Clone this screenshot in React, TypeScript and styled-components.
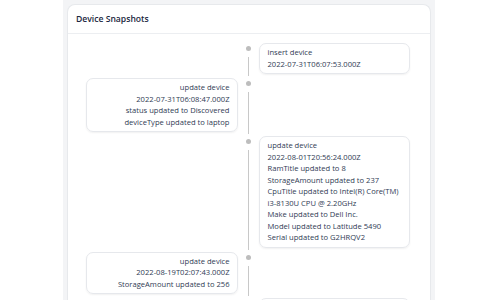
import React from "react";
import styled, { createGlobalStyle } from "styled-components";

const Global = createGlobalStyle`
  html, body { margin: 0; padding: 0; background: #ffffff; }
  body { font-family: "Open Sans", "Noto Sans", sans-serif; }
`;

const Page = styled.div`
  width: 372px;
  margin-left: 63px;
  min-height: 300px;
  background: #f3f4f6;
  padding: 4px 4px 0;
  box-sizing: border-box;
`;

const Panel = styled.section`
  background: #ffffff;
  border: 1px solid #e7e9ec;
  border-bottom: none;
  border-radius: 8px 8px 0 0;
  min-height: 300px;
`;

const PanelHeader = styled.header`
  height: 28px;
  display: flex;
  align-items: center;
  padding: 0 8px;
  border-bottom: 1px solid #eceef1;
  font-size: 8.6px;
  font-weight: 600;
  color: #1b2740;
`;

const Timeline = styled.ul`
  list-style: none;
  margin: 0;
  padding: 9px 20px 0 18px;
`;

const Item = styled.li`
  display: grid;
  grid-template-columns: 1fr 21px 1fr;
  padding-bottom: 4px;
`;

const Side = styled.div<{ $align: "left" | "right" }>`
  display: flex;
  justify-content: ${(p) => (p.$align === "left" ? "flex-end" : "flex-start")};
  align-items: flex-start;
`;

const Separator = styled.div`
  display: flex;
  flex-direction: column;
  align-items: center;
`;

const Dot = styled.span`
  width: 5px;
  height: 5px;
  border-radius: 50%;
  background: #bdbdbd;
  margin-top: 3px;
`;

const Connector = styled.span`
  flex: 1;
  width: 1px;
  background: #c8c8c8;
  margin: 6px 0 -2px;
`;

const Card = styled.div<{ $align: "left" | "right" }>`
  box-sizing: border-box;
  width: 100%;
  border: 1px solid #e6e8ec;
  border-radius: 7px;
  box-shadow: 0 1px 2px rgba(0, 0, 0, 0.06);
  padding: 3px 7px 3px 8px;
  font-size: 7.6px;
  line-height: 11.5px;
  color: #303b54;
  text-align: ${(p) => p.$align};
`;

const Line = styled.div``;

type Snap = { lines: string[] };

const snaps: Snap[] = [
  { lines: ["insert device", "2022-07-31T06:07:53.000Z"] },
  {
    lines: [
      "update device",
      "2022-07-31T06:08:47.000Z",
      "status updated to Discovered",
      "deviceType updated to laptop",
    ],
  },
  {
    lines: [
      "update device",
      "2022-08-01T20:56:24.000Z",
      "RamTitle updated to 8",
      "StorageAmount updated to 237",
      "CpuTitle updated to Intel(R) Core(TM) i3-8130U CPU @ 2.20GHz",
      "Make updated to Dell Inc.",
      "Model updated to Latitude 5490",
      "Serial updated to G2HRQV2",
    ],
  },
  {
    lines: ["update device", "2022-08-19T02:07:43.000Z", "StorageAmount updated to 256"],
  },
  { lines: ["update device", "2022-08-19T02:08:11.000Z"] },
];

export default function App() {
  return (
    <>
      <Global />
      <Page>
        <Panel>
          <PanelHeader>Device Snapshots</PanelHeader>
          <Timeline>
            {snaps.map((s, i) => {
              const right = i % 2 === 0;
              const card = (
                <Card $align={right ? "left" : "right"}>
                  {s.lines.map((l, j) => (
                    <Line key={j}>{l}</Line>
                  ))}
                </Card>
              );
              return (
                <Item key={i}>
                  <Side $align="left">{right ? null : card}</Side>
                  <Separator>
                    <Dot />
                    <Connector />
                  </Separator>
                  <Side $align="right">{right ? card : null}</Side>
                </Item>
              );
            })}
          </Timeline>
        </Panel>
      </Page>
    </>
  );
}
